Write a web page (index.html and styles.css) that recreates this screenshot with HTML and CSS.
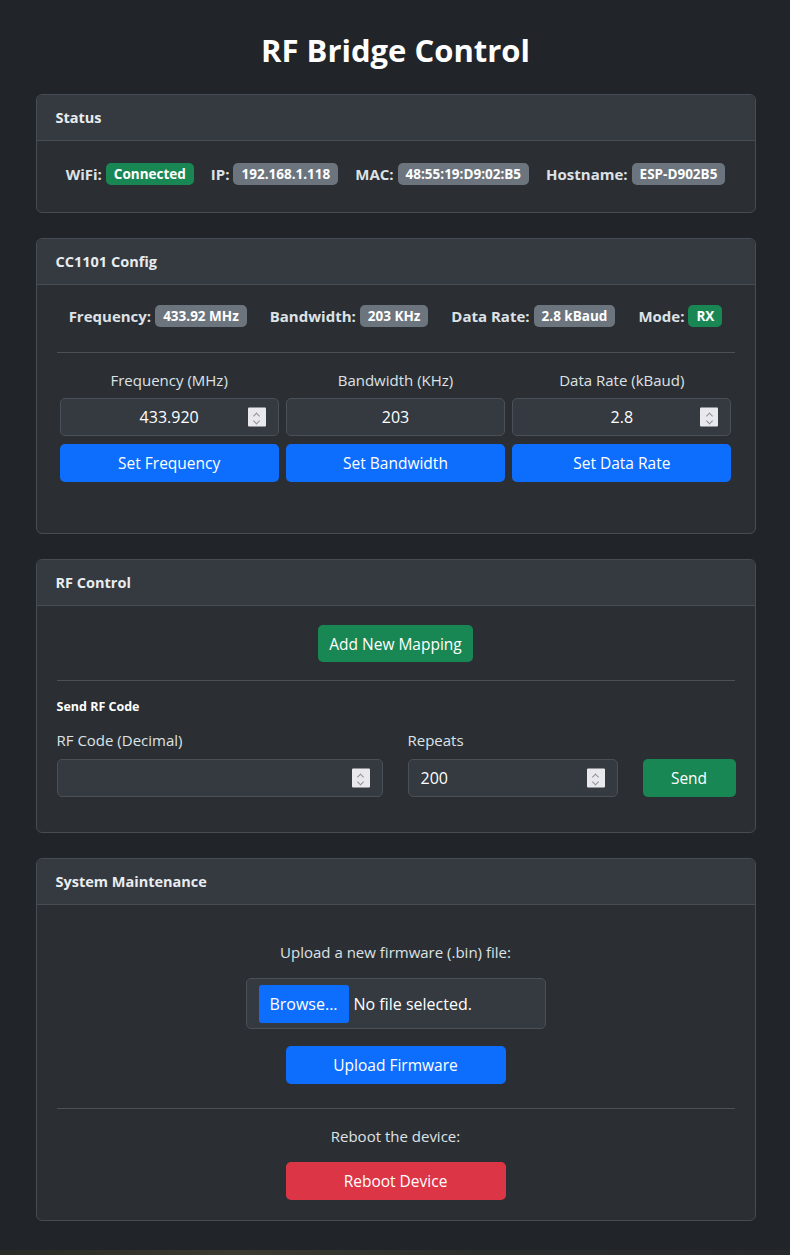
FILE: index.html
```html
<!DOCTYPE html>
<html lang="en">
<head>
<meta charset="utf-8">
<title>RF Bridge Control</title>
<link rel="stylesheet" href="styles.css">
</head>
<body>
<main class="container">
  <h1 class="title">RF Bridge Control</h1>

  <section class="card">
    <div class="card-header">Status</div>
    <div class="card-body status-body">
      <div class="info-row status-row">
        <span class="info"><b>WiFi:</b> <span class="badge green">Connected</span></span>
        <span class="info"><b>IP:</b> <span class="badge gray">192.168.1.118</span></span>
        <span class="info"><b>MAC:</b> <span class="badge gray">48:55:19:D9:02:B5</span></span>
        <span class="info"><b>Hostname:</b> <span class="badge gray">ESP-D902B5</span></span>
      </div>
    </div>
  </section>

  <section class="card">
    <div class="card-header">CC1101 Config</div>
    <div class="card-body config-body">
      <div class="info-row config-row">
        <span class="info"><b>Frequency:</b> <span class="badge gray">433.92 MHz</span></span>
        <span class="info"><b>Bandwidth:</b> <span class="badge gray">203 KHz</span></span>
        <span class="info"><b>Data Rate:</b> <span class="badge gray">2.8 kBaud</span></span>
        <span class="info"><b>Mode:</b> <span class="badge green">RX</span></span>
      </div>
      <hr class="divider">
      <div class="config-grid">
        <div class="config-col">
          <label class="lbl center">Frequency (MHz)</label>
          <div class="field center-text"><span>433.920</span><span class="spin"><i class="up"></i><i class="down"></i></span></div>
          <button class="btn blue">Set Frequency</button>
        </div>
        <div class="config-col">
          <label class="lbl center">Bandwidth (KHz)</label>
          <div class="field center-text"><span>203</span></div>
          <button class="btn blue">Set Bandwidth</button>
        </div>
        <div class="config-col">
          <label class="lbl center">Data Rate (kBaud)</label>
          <div class="field center-text"><span>2.8</span><span class="spin"><i class="up"></i><i class="down"></i></span></div>
          <button class="btn blue">Set Data Rate</button>
        </div>
      </div>
    </div>
  </section>

  <section class="card">
    <div class="card-header">RF Control</div>
    <div class="card-body rf-body">
      <div class="centered">
        <button class="btn green-btn mapping">Add New Mapping</button>
      </div>
      <hr class="divider rf-divider">
      <h6 class="subhead">Send RF Code</h6>
      <div class="send-grid">
        <div class="send-col">
          <label class="lbl">RF Code (Decimal)</label>
          <div class="field"><span></span><span class="spin"><i class="up"></i><i class="down"></i></span></div>
        </div>
        <div class="send-col">
          <label class="lbl">Repeats</label>
          <div class="field left-text"><span>200</span><span class="spin"><i class="up"></i><i class="down"></i></span></div>
        </div>
        <div class="send-col send-btn-col">
          <button class="btn green-btn send">Send</button>
        </div>
      </div>
    </div>
  </section>

  <section class="card">
    <div class="card-header">System Maintenance</div>
    <div class="card-body maint-body">
      <p class="maint-text">Upload a new firmware (.bin) file:</p>
      <div class="file-input">
        <span class="browse">Browse...</span>
        <span class="file-name">No file selected.</span>
      </div>
      <button class="btn blue wide upload">Upload Firmware</button>
      <hr class="divider maint-divider">
      <p class="maint-text reboot-text">Reboot the device:</p>
      <button class="btn red wide reboot">Reboot Device</button>
    </div>
  </section>
</main>
<div class="bottom-strip"></div>
</body>
</html>
```

FILE: styles.css
```css
* { box-sizing: border-box; }

html, body {
  margin: 0;
  padding: 0;
  height: 100%;
}

body {
  background: #212529;
  color: #dee2e6;
  font-family: "Open Sans", "Noto Sans", "Liberation Sans", sans-serif;
  font-size: 16px;
  line-height: 1.5;
  position: relative;
  min-height: 1255px;
  padding-left: 1px;
}

.container {
  width: 720px;
  margin: 0 auto;
  padding-top: 28px;
}

.title {
  margin: 0 0 22px;
  text-align: center;
  font-size: 31px;
  font-weight: 700;
  line-height: 44px;
  color: #ffffff;
}

.card {
  background: #2b2f34;
  border: 1px solid #464c53;
  border-radius: 6px;
  margin-bottom: 25px;
  overflow: hidden;
}

.card-header {
  background: #343a40;
  border-bottom: 1px solid #464c53;
  height: 46px;
  padding: 0 19px;
  display: flex;
  align-items: center;
  font-size: 14.5px;
  font-weight: 700;
  color: #e9ecef;
}

.card-body {
  padding: 20px 20px;
}

.info-row {
  display: flex;
  justify-content: center;
  align-items: center;
  flex-wrap: nowrap;
}

.status-body { padding-top: 20px; padding-bottom: 25px; }

.status-row {
  gap: 17px;
  height: 26px;
}

.config-row {
  gap: 23px;
  height: 22px;
  margin-top: 0;
}

.info {
  font-size: 15px;
  color: #dee2e6;
  white-space: nowrap;
  display: inline-flex;
  align-items: center;
  gap: 4px;
}

.info b { font-weight: 700; }

.badge {
  display: inline-block;
  font-size: 13.5px;
  font-weight: 700;
  color: #ffffff;
  padding: 1px 8px;
  border-radius: 5px;
  line-height: 20px;
}

.badge.gray { background: #6c757d; }
.badge.green { background: #198754; }

.divider {
  border: 0;
  border-top: 1px solid #4a5057;
  margin: 0;
}

.config-body { padding-top: 20px; padding-bottom: 51px; }
.config-body .config-row { margin-top: 0; }
.config-body .divider { margin-top: 25px; }

.config-grid {
  display: grid;
  grid-template-columns: repeat(3, 1fr);
  gap: 7px;
  padding: 0 3px;
  margin-top: 16px;
}

.config-col {
  display: flex;
  flex-direction: column;
}

.lbl {
  display: block;
  font-size: 15px;
  color: #dee2e6;
  line-height: 22px;
  margin-bottom: 7px;
  white-space: nowrap;
}

.lbl.center { text-align: center; }

.field {
  position: relative;
  height: 38px;
  background: #343a40;
  border: 1px solid #4a5057;
  border-radius: 5px;
  display: flex;
  align-items: center;
  padding: 0 12px;
  font-size: 16px;
  color: #ffffff;
}

.field.center-text { justify-content: center; }

.spin {
  position: absolute;
  right: 12px;
  top: 50%;
  transform: translateY(-50%);
  width: 18px;
  height: 19px;
  background: #e9e9ed;
  border-radius: 1px;
  display: flex;
  flex-direction: column;
  align-items: center;
  justify-content: center;
  gap: 3px;
}

.spin i {
  display: block;
  width: 5px;
  height: 5px;
  border-left: 1px solid #8f8f9d;
  border-top: 1px solid #8f8f9d;
}

.spin .up { transform: rotate(45deg); margin-top: 2px; }
.spin .down { transform: rotate(225deg); margin-top: -3px; }

.btn {
  display: inline-flex;
  align-items: center;
  justify-content: center;
  height: 38px;
  border: 0;
  border-radius: 5px;
  font-family: inherit;
  font-size: 15.5px;
  color: #ffffff;
  padding: 0 12px;
  white-space: nowrap;
}

.btn.blue { background: #0d6efd; }
.btn.green-btn { background: #198754; }
.btn.red { background: #dc3545; }

.config-col .btn { margin-top: 8px; width: 100%; }

.centered { display: flex; justify-content: center; }

.rf-body { padding-top: 19px; padding-bottom: 35px; }

.mapping { width: 155px; height: 37px; padding: 0; }

.rf-divider { margin-top: 18px; }

.subhead {
  margin: 17px 0 0;
  font-size: 12.5px;
  font-weight: 700;
  line-height: 18px;
  color: #ffffff;
}

.send-grid {
  display: grid;
  grid-template-columns: 326px 210px 93px;
  gap: 25px;
  margin-top: 13px;
  align-items: end;
}

.send-col { display: flex; flex-direction: column; }

.send-col .lbl { margin-bottom: 8px; }

.field.left-text { justify-content: flex-start; }

.send { width: 93px; }

.maint-body {
  display: flex;
  flex-direction: column;
  align-items: center;
  padding-top: 35px;
  padding-bottom: 20px;
}

.maint-text {
  margin: 0;
  font-size: 15px;
  line-height: 24px;
  color: #dee2e6;
}

.file-input {
  margin-top: 14px;
  width: 300px;
  height: 51px;
  background: #343a40;
  border: 1px solid #4a5057;
  border-radius: 5px;
  display: flex;
  align-items: center;
  padding: 0 12px;
  gap: 5px;
}

.browse {
  background: #0d6efd;
  color: #ffffff;
  border-radius: 3px;
  height: 38px;
  width: 90px;
  display: flex;
  align-items: center;
  justify-content: center;
  font-size: 16px;
}

.file-name { font-size: 16px; color: #ffffff; }

.wide { width: 220px; }

.upload { margin-top: 17px; }

.maint-divider { width: 100%; margin-top: 24px; }

.reboot-text { margin-top: 15px; }

.reboot { margin-top: 14px; }

.bottom-strip {
  position: absolute;
  left: 0;
  right: 0;
  bottom: 0;
  height: 5px;
  background: linear-gradient(90deg, #2a2a26 0%, #3a3a30 30%, #2b2d2c 60%, #262a2e 100%);
}
```
